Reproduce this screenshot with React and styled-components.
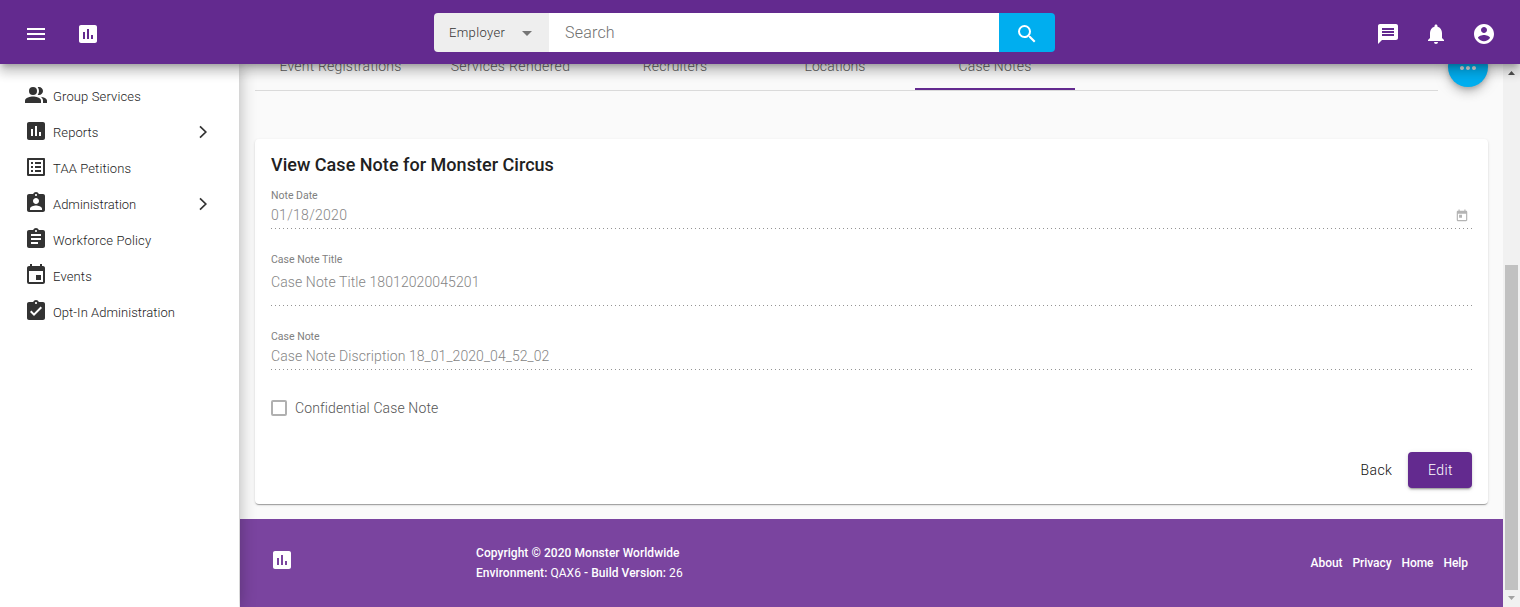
import React from "react";
import styled, { createGlobalStyle } from "styled-components";
import {
  MdMenu, MdAssessment, MdListAlt, MdAssignmentInd, MdAssignment,
  MdEvent, MdAssignmentTurnedIn, MdMessage, MdNotifications, MdSearch, MdToday,
  MdMoreHoriz, MdArrowDropDown,
} from "react-icons/md";

const Global = createGlobalStyle`
  * { box-sizing: border-box; }
  body { margin: 0; font-family: Roboto, "Liberation Sans", sans-serif; font-weight: 400; overflow: hidden; }
`;

const Page = styled.div`
  display: grid;
  grid-template: 64px 543px / 240px 1263px 17px;
  width: 1520px;
  height: 607px;
  overflow: hidden;
  background: #fafafa;
`;

const Header = styled.header`
  grid-column: 1 / -1;
  z-index: 5;
  position: relative;
  display: flex;
  align-items: center;
  padding: 4px 24px 0;
  background: #632a8f;
  color: #fff;
  box-shadow: 0 5px 5px -3px rgba(0, 0, 0, 0.2), 0 8px 10px 1px rgba(0, 0, 0, 0.14),
    0 3px 14px 2px rgba(0, 0, 0, 0.12);
  svg { display: block; }
`;

const HeaderLeft = styled.div`
  display: flex;
  gap: 28px;
  width: 410px;
`;

const SearchBar = styled.div`
  display: grid;
  grid-template-columns: 115px 450px 56px;
  height: 39px;
  margin-top: -3px;
  border-radius: 4px;
  overflow: hidden;
`;

const Scope = styled.div`
  display: flex;
  align-items: center;
  justify-content: space-between;
  padding: 0 10px 0 15px;
  background: #eee;
  color: #333;
  font-size: 13px;
  font-weight: 300;
  letter-spacing: 0.35px;
  svg { color: #757575; }
`;

const SearchInput = styled.div`
  padding-left: 16px;
  background: #fff;
  color: #707070;
  font-size: 16px;
  font-weight: 300;
  line-height: 39px;
  letter-spacing: 0.2px;
`;

const SearchButton = styled.div`
  display: grid;
  place-items: center;
  background: #00aeef;
  padding: 2px 1px 0 0;
`;

const HeaderRight = styled.div`
  display: flex;
  gap: 24px;
  margin-left: auto;
`;

const Sidebar = styled.nav`
  z-index: 2;
  position: relative;
  width: 239px;
  padding-top: 13px;
  background: #fff;
  box-shadow: 0 0 16px rgba(0, 0, 0, 0.3);
`;

const NavItem = styled.div`
  display: grid;
  grid-template-columns: 29px 1fr 9px;
  align-items: center;
  height: 36px;
  padding: 0 31px 0 24px;
  color: #333;
  font-size: 13px;
  letter-spacing: ${(p) => p.$track}px;
  span { padding-top: 3px; font-weight: 300; color: #222; }
  > svg:first-child { display: block; }
  > svg:last-child:not(:first-child) { margin-top: 2px; }
`;

const Main = styled.main`
  overflow: hidden;
  display: flex;
  flex-direction: column;
`;

const TopRow = styled.div`
  display: flex;
  height: 27px;
  align-items: flex-end;
  margin-left: 15px;
`;

const Tabs = styled.div`
  display: flex;
  width: 1183px;
  border-bottom: 1px solid #dadada;
`;

const Tab = styled.div`
  width: ${(p) => p.$width}px;
  height: 48px;
  line-height: 48px;
  text-align: center;
  color: #606060;
  font-size: 14px;
  font-weight: 300;
  letter-spacing: ${(p) => p.$track}px;
  border-bottom: 2px solid ${(p) => (p.$active ? "#632a8f" : "transparent")};
`;

const Fab = styled.div`
  display: grid;
  place-items: center;
  width: 40px;
  height: 40px;
  margin: 0 0 4px 10px;
  padding-top: 2px;
  border-radius: 50%;
  background: #00aeef;
  color: #ddd;
  box-shadow: 0 3px 5px -1px rgba(0, 0, 0, 0.2), 0 6px 10px rgba(0, 0, 0, 0.14),
    0 1px 18px rgba(0, 0, 0, 0.12);
`;

const Card = styled.section`
  width: 1233px;
  height: 365px;
  margin: 48px 0 15px 15px;
  padding: 15px 16px 16px;
  border-radius: 4px;
  background: #fff;
  box-shadow: 0 2px 1px -1px rgba(0, 0, 0, 0.2), 0 1px 1px rgba(0, 0, 0, 0.14),
    0 1px 3px rgba(0, 0, 0, 0.12);
`;

const Title = styled.h1`
  margin: 0;
  height: 35px;
  color: #212121;
  font-size: 18px;
  font-weight: 500;
  line-height: 22px;
  letter-spacing: 0.03px;
`;

const Field = styled.div`
  height: ${(p) => p.$height}px;
  margin-bottom: ${(p) => p.$gap}px;
  background: repeating-linear-gradient(to right, #949494 0 1px, transparent 1px 4px) bottom / 100% 1px no-repeat;
`;

const Label = styled.div`
  height: 13px;
  color: #808080;
  font-size: 10.5px;
  line-height: 13px;
`;

const Value = styled.div`
  display: flex;
  align-items: center;
  justify-content: space-between;
  height: 16px;
  margin-top: ${(p) => p.$top}px;
  padding-right: 3px;
  color: #858585;
  font-size: 14px;
  font-weight: 300;
  letter-spacing: ${(p) => p.$track}px;
  svg { color: #b4b4b4; margin-top: 2px; }
`;

const CheckRow = styled.div`
  display: flex;
  align-items: center;
  gap: 8px;
  height: 16px;
  color: #555;
  font-size: 14px;
  font-weight: 300;
  letter-spacing: 0.12px;
`;

const CheckBox = styled.span`
  width: 16px;
  height: 16px;
  border: 2px solid #b0b0b0;
  border-radius: 2px;
`;

const Actions = styled.div`
  display: flex;
  justify-content: flex-end;
  margin-top: 36px;
`;

const Button = styled.div`
  width: 64px;
  height: 36px;
  border-radius: 4px;
  text-align: center;
  line-height: 36px;
  padding-left: 1px;
  font-size: 14px;
  font-weight: 300;
  letter-spacing: 0.4px;
  color: ${(p) => (p.$primary ? "#fff" : "#111")};
  background: ${(p) => (p.$primary ? "#632a8f" : "transparent")};
  box-shadow: ${(p) => (p.$primary ? "0 3px 1px -2px rgba(0,0,0,.2), 0 2px 2px rgba(0,0,0,.14), 0 1px 5px rgba(0,0,0,.12)" : "none")};
`;

const Footer = styled.footer`
  display: flex;
  align-items: center;
  height: 88px;
  padding: 0 35px 0 30px;
  background: #7a449f;
  color: #fff;
  font-size: 12px;
  font-weight: 500;
`;

const FooterLogo = styled.div`
  width: 206px;
  height: 30px;
`;

const Legal = styled.div`
  line-height: 20px;
  letter-spacing: 0.05px;
  b { font-weight: 500; }
  span { font-weight: 400; }
`;

const FooterLinks = styled.div`
  display: flex;
  gap: 10px;
  margin-left: auto;
  letter-spacing: -0.06px;
`;

const ScrollBar = styled.div`
  display: flex;
  flex-direction: column;
  align-items: center;
  background: #f1f1f1;
`;

const Arrow = styled.svg`
  display: block;
  width: 17px;
  height: 17px;
  fill: ${(p) => p.$color};
`;

const Thumb = styled.div`
  width: 13px;
  height: 325px;
  margin-top: 184px;
  background: #c1c1c1;
`;

const AccountIcon = () => (
  <svg width="24" height="24" viewBox="0 0 24 24" fill="currentColor">
    <path d="M12 2C6.48 2 2 6.48 2 12s4.48 10 10 10 10-4.48 10-10S17.52 2 12 2zm0 3c1.66 0 3 1.34 3 3s-1.34 3-3 3-3-1.34-3-3 1.34-3 3-3zm0 14.2c-2.5 0-4.71-1.28-6-3.22.03-1.99 4-3.08 6-3.08 1.99 0 5.97 1.09 6 3.08-1.29 1.94-3.5 3.22-6 3.22z" />
  </svg>
);

const PeopleIcon = () => (
  <svg width="24" height="24" viewBox="0 0 24 24" fill="currentColor">
    <circle cx="9" cy="8" r="4" />
    <path d="M9 13.5c-2.67 0-8 1.34-8 4V20h16v-2.500c0-2.660-5.330-4-8-4z" />
    <path d="M15 12c2.210 0 4-1.790 4-4s-1.790-4-4-4c-.47 0-.91.1-1.330.240C14.500 5.270 15 6.580 15 8s-.5 2.730-1.330 3.760c.42.14.86.24 1.330.24z" />
    <path d="M16.670 13.630C18.040 14.560 19 15.820 19 17.500V20h4v-2.500c0-2.180-3.570-3.470-6.330-3.870z" />
  </svg>
);

const Chevron = () => (
  <svg width="9" height="14" viewBox="0 0 9 14" fill="none" stroke="#333" strokeWidth="1.7">
    <path d="M1 1.3 6.8 7 1 12.7" />
  </svg>
);

const NAV = [
  ["Group Services", PeopleIcon, false, 0.13],
  ["Reports", MdAssessment, true, 0.08],
  ["TAA Petitions", MdListAlt, false, 0.13],
  ["Administration", MdAssignmentInd, true, 0],
  ["Workforce Policy", MdAssignment, false, 0.15],
  ["Events", MdEvent, false, 0.15],
  ["Opt-In Administration", MdAssignmentTurnedIn, false, 0.05],
];

const TABS = [
  ["Event Registrations", 171, 0.2],
  ["Services Rendered", 169, 0.35],
  ["Recruiters", 160, 0.2],
  ["Locations", 160, 0.1],
  ["Case Notes", 160, 0.2],
];

export default function App() {
  return (
    <Page>
      <Global />
      <Header>
        <HeaderLeft>
          <MdMenu size={24} />
          <MdAssessment size={24} />
        </HeaderLeft>
        <SearchBar>
          <Scope>Employer <MdArrowDropDown size={24} /></Scope>
          <SearchInput>Search</SearchInput>
          <SearchButton><MdSearch size={24} /></SearchButton>
        </SearchBar>
        <HeaderRight>
          <MdMessage size={24} />
          <MdNotifications size={24} />
          <AccountIcon />
        </HeaderRight>
      </Header>
      <Sidebar>
        {NAV.map(([name, Icon, more, track]) => (
          <NavItem key={name} $track={track}>
            <Icon size={24} />
            <span>{name}</span>
            {more && <Chevron />}
          </NavItem>
        ))}
      </Sidebar>
      <Main>
        <TopRow>
          <Tabs>
            {TABS.map(([name, width, track]) => (
              <Tab key={name} $width={width} $track={track} $active={name === "Case Notes"}>{name}</Tab>
            ))}
          </Tabs>
          <Fab><MdMoreHoriz size={24} /></Fab>
        </TopRow>
        <Card>
          <Title>View Case Note for Monster Circus</Title>
          <Field $height={40} $gap={24}>
            <Label>Note Date</Label>
            <Value $top={5} $track={0.3}>01/18/2020 <MdToday size={14} /></Value>
          </Field>
          <Field $height={53} $gap={24}>
            <Label>Case Note Title</Label>
            <Value $top={8} $track={0.1}>Case Note Title 18012020045201</Value>
          </Field>
          <Field $height={40} $gap={30}>
            <Label>Case Note</Label>
            <Value $top={5} $track={0.08}>Case Note Discription 18_01_2020_04_52_02</Value>
          </Field>
          <CheckRow><CheckBox />Confidential Case Note</CheckRow>
          <Actions>
            <Button>Back</Button>
            <Button $primary>Edit</Button>
          </Actions>
        </Card>
        <Footer>
          <FooterLogo><MdAssessment size={24} /></FooterLogo>
          <Legal>
            <div>Copyright © 2020 Monster Worldwide</div>
            <div><b>Environment:</b> <span>QAX6</span> - <b>Build Version:</b> <span>26</span></div>
          </Legal>
          <FooterLinks>
            <span>About</span><span>Privacy</span><span>Home</span><span>Help</span>
          </FooterLinks>
        </Footer>
      </Main>
      <ScrollBar>
        <Arrow viewBox="0 0 17 17" $color="#505050"><path d="M5 11 8.5 7 12 11z" /></Arrow>
        <Thumb />
        <Arrow viewBox="0 0 17 17" $color="#a3a3a3"><path d="M5 6 8.5 10 12 6z" /></Arrow>
      </ScrollBar>
    </Page>
  );
}
